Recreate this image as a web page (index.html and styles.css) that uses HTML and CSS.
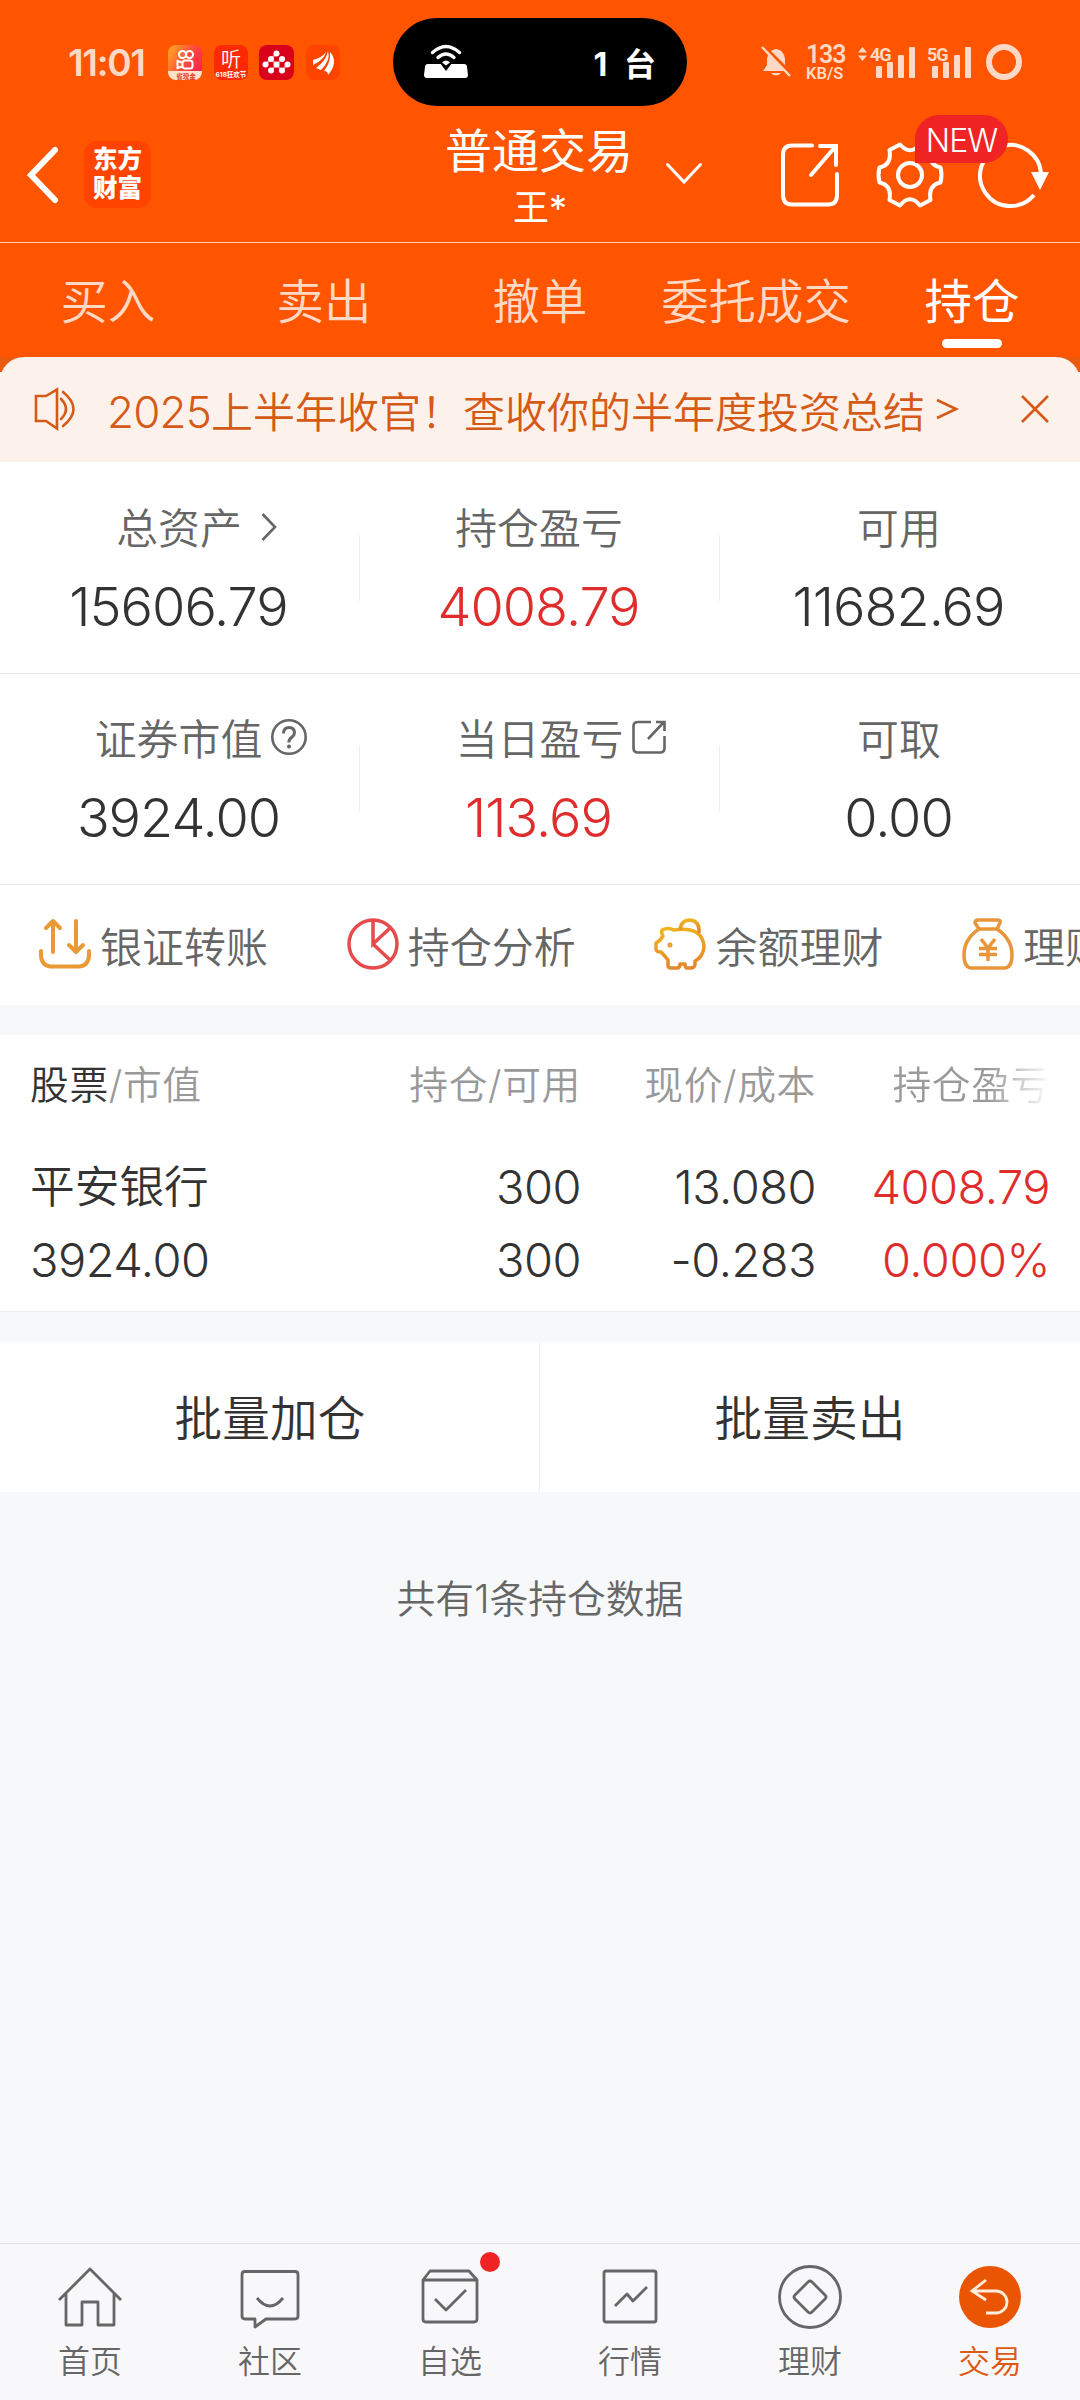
FILE: index.html
```html
<!DOCTYPE html>
<html lang="zh-CN">
<head>
<meta charset="utf-8">
<title>普通交易</title>
<link rel="stylesheet" href="styles.css">
</head>
<body>
<div class="top">
  <div class="status">
    <span class="time">11:01</span>
    <div class="apps">
      <svg width="34" height="35" viewBox="0 0 34 35">
        <defs>
          <linearGradient id="ks" x1="0" y1="0" x2="1" y2="0.6"><stop offset="0" stop-color="#ffae1f"/><stop offset="0.6" stop-color="#ff4a3c"/><stop offset="1" stop-color="#ff2450"/></linearGradient>
          <clipPath id="ksClip"><rect width="34" height="35" rx="8"/></clipPath>
        </defs>
        <g clip-path="url(#ksClip)">
          <rect width="34" height="35" fill="url(#ks)"/>
          <path d="M0 26h34v9H0z" fill="#ffe3c8"/>
        </g>
        <g fill="none" stroke="#fff" stroke-width="2">
          <circle cx="14.500" cy="9.500" r="3.500"/><circle cx="21.500" cy="9.500" r="3.500"/>
          <rect x="14.500" y="15.500" width="10" height="8" rx="2.500"/><path d="M14 17.500l-4.500-1.500v7l4.500-1.500"/>
        </g>
        <text x="18" y="33.500" class="mini red">省现金</text>
      </svg>
      <svg width="34" height="35" viewBox="0 0 34 35">
        <rect width="34" height="35" rx="8" fill="#fb2a05"/>
        <text x="17" y="22" class="ting">听</text>
        <text x="17" y="32" class="mini">618狂欢节</text>
      </svg>
      <svg width="35" height="35" viewBox="0 0 35 35">
        <rect width="35" height="35" rx="8" fill="#d9001b"/>
        <path d="M17.500 8.500L6.500 19.500M23 14L12 25.500M12 14L23 25.500L28.500 19.500" stroke="#e88" stroke-width="2" fill="none"/>
        <g fill="#fff">
          <circle cx="17.500" cy="8.500" r="3"/><circle cx="12" cy="14" r="3"/><circle cx="23" cy="14" r="3"/>
          <circle cx="6.500" cy="19.500" r="3"/><circle cx="17.500" cy="19.500" r="3"/><circle cx="28.500" cy="19.500" r="3"/>
          <circle cx="12" cy="25.500" r="3"/><circle cx="23" cy="25.500" r="3"/>
        </g>
      </svg>
      <svg width="34" height="35" viewBox="0 0 34 35">
        <rect width="34" height="35" rx="8" fill="#ff4400"/>
        <path d="M7 15Q17 12 20 7Q18 15 7 20zM10 23Q20 16 22 6Q25 15 15 25zM18 26Q25 17 24 7Q33 17 22 30Q22 26 18 26z" fill="#fff"/>
      </svg>
    </div>
    <div class="island">
      <svg width="44" height="36" viewBox="0 0 44 36" fill="none">
        <path d="M4 20h36q3 0 3 3l1 8q0 3-3 3H3q-3 0-3-3l1-8q0-3 3-3z" fill="#fff"/>
        <path d="M13 15q9-8.500 18 0l-9 12z" fill="#000"/>
        <path d="M8.500 8.500q13.500-12 27 0M14 13.500q8-7 16 0" stroke="#fff" stroke-width="3.400" stroke-linecap="round"/>
        <path d="M22 21.500l-4-3q4-4 8 0z" fill="#fff"/>
      </svg>
      <span>1 台</span>
    </div>
    <div class="sys">
      <svg width="30" height="33" viewBox="0 0 30 33">
        <path d="M15 3q8 1 9 10v6l4 6H2l4-6v-6q1-9 9-10zM10 27h10q-5 5-10 0z" fill="#ffd9c5"/>
        <path d="M3 1L31 29" stroke="#ff5500" stroke-width="4"/>
        <path d="M1 1L29 30" stroke="#ffd9c5" stroke-width="2.500"/>
      </svg>
      <div class="speed"><b>133</b><i>KB/S</i></div>
      <svg width="114" height="33" viewBox="0 0 114 33" fill="#ffd9c5">
        <path d="M0 6.500L4.500 1L9 6.500zM0 9.500L4.500 15L9 9.500z"/>
        <text x="12" y="14.500" class="net">4G</text><text x="69" y="14.500" class="net">5G</text>
        <rect x="18" y="20" width="6" height="12" rx="1"/><rect x="29" y="16" width="6" height="16" rx="1"/><rect x="40" y="9" width="6" height="23" rx="1"/><rect x="51" y="1" width="6" height="31" rx="1"/>
        <rect x="74" y="20" width="6" height="12" rx="1"/><rect x="85" y="16" width="6" height="16" rx="1"/><rect x="96" y="9" width="6" height="23" rx="1"/><rect x="107" y="1" width="6" height="31" rx="1"/>
      </svg>
      <span class="ring"></span>
    </div>
  </div>

  <div class="header">
    <div class="left">
      <svg width="32" height="58" viewBox="0 0 32 58"><path d="M28 4L4 29L28 54" fill="none" stroke="#fff" stroke-width="6" stroke-linecap="round"/></svg>
      <div class="logo">东方<br>财富</div>
    </div>
    <div class="title"><div class="name">普通交易</div><div class="user">王*</div></div>
    <svg class="down" width="36" height="22" viewBox="0 0 36 22"><path d="M1.500 1.500L18 19L34.500 1.500" fill="none" stroke="#fff" stroke-width="3" stroke-linecap="round"/></svg>
    <div class="tools">
      <svg width="60" height="66" viewBox="0 0 60 66" fill="none" stroke="#fff" stroke-width="4">
        <path d="M32 3.500H12Q3 3.500 3 13V53Q3 62.500 12 62.500H48Q57 62.500 57 53V32" stroke-linecap="round"/>
        <path d="M40 4H56V23M55 5L31 33" stroke-linecap="round"/>
      </svg>
      <svg width="68" height="66" viewBox="0 0 68 66" fill="none" stroke="#fff" stroke-width="4">
        <path d="M24 2.500L13.500 8Q16 23 3.500 25.500Q1.500 33 3.500 40.500Q16 43 13.500 58L24 63.500Q34 51 44 63.500L54.500 58Q52 43 64.500 40.500Q66.500 33 64.500 25.500Q52 23 54.500 8L44 2.500Q34 14 24 2.500z" stroke-linejoin="round"/>
        <circle cx="34" cy="33" r="12"/>
      </svg>
      <svg width="72" height="68" viewBox="0 0 72 68">
        <path d="M56 53A30.500 30.500 0 1 1 63 32" fill="none" stroke="#fff" stroke-width="4"/>
        <path d="M53 30H71L62 48z" fill="#fff"/>
      </svg>
      <span class="new">NEW</span>
    </div>
  </div>

  <div class="tabs">
    <span>买入</span><span>卖出</span><span>撤单</span><span>委托成交</span><span class="on">持仓</span>
  </div>
</div>

<div class="noticeWrap">
  <div class="notice">
    <svg width="42" height="44" viewBox="0 0 42 44" fill="none" stroke="#d65a17" stroke-width="2.600">
      <path d="M2 9H12L23 2.500V41.500L12 34H2z"/><path d="M27 12Q37 22 27 32M29 5Q50 22 29 39" stroke-linecap="round"/>
    </svg>
    <span class="msg"><span class="num">2025</span>上半年收官！查收你的半年度投资总结</span>
    <svg class="gt" width="22" height="20" viewBox="0 0 22 20"><path d="M1 1L20 10L1 19" fill="none" stroke="#d65a17" stroke-width="2.600"/></svg>
    <svg class="close" width="28" height="28" viewBox="0 0 28 28"><path d="M1 1L27 27M27 1L1 27" stroke="#d65a17" stroke-width="2.600"/></svg>
  </div>
</div>

<div class="stats">
  <div class="cell"><div class="label">总资产<svg class="more" width="16" height="28" viewBox="0 0 16 28"><path d="M1.500 1L14 14L1.500 27" fill="none" stroke="#666" stroke-width="2.600"/></svg></div><div class="val">15606.79</div></div>
  <div class="cell"><div class="label">持仓盈亏</div><div class="val up">4008.79</div></div>
  <div class="cell"><div class="label">可用</div><div class="val">11682.69</div></div>
</div>
<div class="stats">
  <div class="cell"><div class="label">证券市值<svg class="tip" width="36" height="36" viewBox="0 0 36 36" fill="none" stroke="#666" stroke-width="2.600"><circle cx="18" cy="18" r="16.700"/><path d="M12.500 14.500Q12.500 8.500 18 8.500T23.500 14Q23.500 16 20.500 18.500T18 23.500" stroke-width="3"/><circle cx="18" cy="27.500" r="1" stroke-width="2"/></svg></div><div class="val">3924.00</div></div>
  <div class="cell"><div class="label">当日盈亏<svg class="tip" width="34" height="34" viewBox="0 0 34 34" fill="none" stroke="#666" stroke-width="2.600"><path d="M19 2H6Q1.500 2 1.500 6V28Q1.500 32.500 6 32.500H28Q32.500 32.500 32.500 28V16M24 2H32.500V11M32 2L16 19"/></svg></div><div class="val up">113.69</div></div>
  <div class="cell"><div class="label">可取</div><div class="val">0.00</div></div>
</div>

<div class="quick">
  <div class="item">
    <svg width="52" height="52" viewBox="0 0 52 52" fill="none" stroke="#e99a36" stroke-width="4" stroke-linecap="round" stroke-linejoin="round"><path d="M14 34V4M7 10L14 3L21 10M37 3V34M30 27L37 34L44 27M2 33V38Q3 48 12 48.500H40Q49 48 50 38V33"/></svg>
    银证转账
  </div>
  <div class="item">
    <svg width="52" height="52" viewBox="0 0 52 52" fill="none" stroke="#e54c4c" stroke-width="3.500"><circle cx="26" cy="26" r="24"/><path d="M26 2V26L43 10M26 26L43 42"/></svg>
    持仓分析
  </div>
  <div class="item">
    <svg width="52" height="52" viewBox="0 0 52 52" fill="none" stroke="url(#gold)" stroke-width="3.500" stroke-linejoin="round">
      <defs><linearGradient id="gold" x1="0" y1="0" x2="0.200" y2="1"><stop offset="0" stop-color="#f0b51c"/><stop offset="1" stop-color="#e5892b"/></linearGradient></defs>
      <path d="M8 12Q14 9 20 12Q49 8 50 29Q49 39 41 43V47Q40 50 37 50H33Q31 50 31 46H26Q26 50 23 50H17Q14 50 14 47V42Q11 38 7 34Q2 34 2 31V25Q6 23 9 18Q7 15 8 12z"/>
      <path d="M26 12Q27 2 36 2Q46 3 45 15"/><circle cx="16" cy="27" r="1" stroke="#e79a25" stroke-width="3"/>
    </svg>
    余额理财
  </div>
  <div class="item">
    <svg width="52" height="52" viewBox="0 0 52 52" fill="none" stroke="#e9963b" stroke-width="3.500" stroke-linejoin="round">
      <path d="M17 11L13 5Q13 2 16 2H36Q39 2 38 5L35 11zM17 11Q2 21 2 37Q2 50 10 50H42Q50 50 50 37Q50 21 35 11"/>
      <path d="M19 21L26 30L33 21M26 30V43M17 30.500H35M17 36.500H35"/>
    </svg>
    理财
  </div>
</div>

<div class="table">
  <div class="row head"><span><b>股票</b>/市值</span><span>持仓/可用</span><span>现价/成本</span><span class="fade">持仓盈亏</span></div>
  <div class="row"><span class="stock">平安银行</span><span>300</span><span>13.080</span><span class="up">4008.79</span></div>
  <div class="row"><span>3924.00</span><span>300</span><span>-0.283</span><span class="up">0.000%</span></div>
</div>

<div class="batch"><span>批量加仓</span><span>批量卖出</span></div>
<div class="total">共有1条持仓数据</div>

<div class="nav">
  <div><svg width="64" height="64" viewBox="0 0 64 64"><path d="M1 35L32 4L63 35M8 29V60H24V37H40V60H56V29"/></svg>首页</div>
  <div><svg width="64" height="64" viewBox="0 0 64 64"><path d="M7 6.500H57Q60 6.500 60 9.500V51Q60 54 57 54H28L17 62V54H7Q4 54 4 51V9.500Q4 6.500 7 6.500zM19 33Q32 49 45 33"/></svg>社区</div>
  <div><svg width="64" height="64" viewBox="0 0 64 64"><path d="M5 15L12 6H51L59 15V54Q59 57 56 57H8Q5 57 5 54zM5 15H59M17 34L28 45L48 25"/></svg>自选<em></em></div>
  <div><svg width="64" height="64" viewBox="0 0 64 64"><path d="M8 6H56Q58 6 58 8V55Q58 57 56 57H8Q6 57 6 55V8Q6 6 8 6zM17 41L29 29L35 36L49 22"/></svg>行情</div>
  <div><svg width="64" height="64" viewBox="0 0 64 64"><circle cx="32" cy="32" r="30.500"/><path d="M30 17Q32 15 34 17L47 30Q49 32 47 34L34 47Q32 49 30 47L17 34Q15 32 17 30z"/></svg>理财</div>
  <div class="act"><svg width="64" height="64" viewBox="0 0 64 64"><circle class="dot" cx="32" cy="32" r="31"/><path class="w" d="M28 15L14 26L28 35M15 26H38A11 11 0 0 1 38 48H28"/></svg>交易</div>
</div>
</body>
</html>
```
FILE: styles.css
```css
*{
    box-sizing: border-box;
}
body{
    margin: 0;
    width: 1080px;
    height: 2400px;
    overflow: hidden;
    display: flex;
    flex-direction: column;
    background: #f6f8fa;
    color: #333;
    font-family: Inter, "Noto Sans CJK SC", sans-serif;
    font-weight: 350;
    white-space: nowrap;
}
svg{
    display: block;
    flex: none;
    overflow: visible;
}
.top{
    background: #ff5500;
    color: #fff;
    height: 357px;
}
.status{
    height: 124px;
    display: flex;
    align-items: center;
    color: #ffd9c5;
}
.time{
    margin-left: 68px;
    width: 100px;
    font-size: 37px;
    font-weight: 600;
    letter-spacing: -1.3px;
}
.apps{
    display: flex;
    gap: 11.5px;
    width: 171px;
}
.mini{
    font-size: 6.5px;
    font-weight: 700;
    fill: #fff;
    text-anchor: middle;
}
.red{
    fill: #e8321c;
}
.ting{
    font-size: 20px;
    fill: #fff;
    text-anchor: middle;
}
.island{
    margin-left: 54px;
    width: 294px;
    height: 88px;
    border-radius: 44px;
    background: #000;
    color: #fff;
    display: flex;
    align-items: center;
    justify-content: space-between;
    padding: 0 31px;
    font-size: 32px;
    font-weight: 700;
    word-spacing: 9px;
}
.sys{
    margin-left: 74px;
    display: flex;
    align-items: center;
}
.speed{
    width: 40px;
    margin: 2px 12px 0 15px;
}
.speed b, .speed i{
    display: block;
    font-style: normal;
    font-weight: 600;
    font-family: Roboto, sans-serif;
}
.speed b{
    font-size: 25px;
    line-height: 20px;
    letter-spacing: -1.2px;
}
.speed i{
    font-size: 16.5px;
    line-height: 17px;
}
.net{
    font-family: Roboto, sans-serif;
    font-size: 18px;
    font-weight: 700;
    letter-spacing: -1px;
}
.ring{
    width: 36px;
    height: 36px;
    border: 6px solid #ffd9c5;
    border-radius: 50%;
    margin-left: 14px;
}
.header{
    height: 119px;
    border-bottom: 1px solid #ffd0b0;
    display: grid;
    grid-template-columns: 440px 198px 28px 114px 1fr;
    padding-top: 1px;
}
.left{
    display: flex;
    align-items: center;
    padding-left: 27px;
    height: 99px;
}
.logo{
    margin-left: 25px;
    width: 67px;
    height: 67px;
    border-radius: 13px;
    background: #ff4400;
    font-size: 24.5px;
    line-height: 29px;
    font-weight: 900;
    text-align: center;
    padding-top: 4px;
}
.title{
    text-align: center;
    font-weight: 400;
}
.name{
    font-size: 47px;
    line-height: 52px;
}
.user{
    font-size: 36px;
    line-height: 62px;
    padding-left: 2px;
}
.down{
    grid-column: 4;
    margin-top: 38px;
}
.tools{
    display: flex;
    align-items: flex-start;
    gap: 36px;
    padding-top: 17px;
    position: relative;
}
.tools svg:nth-child(3){
    margin-left: -2px;
}
.new{
    position: absolute;
    left: 135px;
    top: -10px;
    width: 93px;
    height: 48px;
    border-radius: 24px 24px 24px 0;
    background: #f02424;
    font-size: 32px;
    line-height: 51px;
    text-align: center;
    letter-spacing: -1px;
}
.tabs{
    display: grid;
    grid-template-columns: repeat(5, 1fr);
    text-align: center;
    font-size: 47.4px;
    line-height: 118px;
    color: #ffd9c5;
}
.on{
    color: #fff;
    font-weight: 400;
    position: relative;
}
.on::after{
    content: "";
    position: absolute;
    left: 78px;
    top: 96px;
    width: 60px;
    height: 9px;
    border-radius: 5px;
    background: #fff;
}
.noticeWrap{
    height: 106px;
    flex: none;
    background: linear-gradient(#ea5a0c 15px, #fff 15px);
}
.notice{
    height: 105px;
    border-radius: 24px 24px 0 0;
    background: #fdf1eb;
    color: #d65a17;
    display: flex;
    align-items: center;
    padding: 0 31px 1px 34px;
    font-size: 42px;
}
.msg{
    margin-left: 31px;
}
.num{
    font-size: 44px;
    letter-spacing: -0.8px;
}
.gt{
    margin-left: 11px;
}
.close{
    margin-left: auto;
}
.stats{
    height: 211px;
    flex: none;
    background: #fff;
    border-bottom: 1px solid #eaeaea;
    display: grid;
    grid-template-columns: repeat(3, 1fr);
}
.cell{
    text-align: center;
    padding-top: 36px;
    background: linear-gradient(#eee, #eee) right 72px / 1px 66px no-repeat;
}
.cell:last-child{
    background: none;
}
.label{
    display: flex;
    justify-content: center;
    align-items: center;
    font-size: 41.9px;
    line-height: 60px;
    color: #666;
    margin-right: 2px;
}
.more{
    margin: -4px -35px 0 19px;
}
.tip{
    margin: -6px -44px 0 9px;
}
.val{
    font-size: 54px;
    line-height: 96px;
    letter-spacing: -1px;
    padding-right: 3px;
}
.up{
    color: #df2d2d;
}
.quick{
    height: 120px;
    flex: none;
    overflow: hidden;
    background: #fff;
    display: flex;
    padding-left: 39px;
    color: #666;
    font-size: 42px;
}
.item{
    flex: none;
    width: 307.7px;
    display: flex;
    align-items: center;
    gap: 9px;
    padding-bottom: 2px;
}
.table{
    margin-top: 30px;
    height: 277px;
    background: #fff;
    border-bottom: 1px solid #eaecee;
    padding: 12px 30px 0;
}
.row{
    display: grid;
    grid-template-columns: 315px 236px 235px 234px;
    text-align: right;
    font-size: 47px;
    line-height: 73px;
    height: 73px;
    letter-spacing: -0.5px;
}
.row span:first-child{
    text-align: left;
}
.head{
    font-size: 38.8px;
    line-height: 75px;
    height: 103px;
    color: #999;
    letter-spacing: 0.6px;
}
.head b{
    font-weight: 350;
    color: #333;
}
.fade{
    height: 75px;
    background: linear-gradient(90deg, #999 172px, #fff 236px);
    -webkit-background-clip: text;
    background-clip: text;
    color: transparent;
}
.row .stock{
    font-size: 44.7px;
    letter-spacing: 0;
    line-height: 75px;
}
.batch{
    margin-top: 30px;
    height: 150px;
    background: linear-gradient(#eee, #eee) 539px 0 / 1px 100% no-repeat #fff;
    display: grid;
    grid-template-columns: 1fr 1fr;
    text-align: center;
    font-size: 47.7px;
    line-height: 154px;
}
.total{
    margin-top: 78px;
    text-align: center;
    font-size: 38.8px;
    line-height: 58px;
    color: #666;
}
.nav{
    margin-top: auto;
    height: 157px;
    border-top: 1px solid #e2e2e4;
    background: #f8f8fa;
    display: grid;
    grid-template-columns: repeat(6, 1fr);
    font-size: 32px;
    color: #666;
    line-height: 65px;
}
.nav div{
    display: flex;
    flex-direction: column;
    align-items: center;
    padding-top: 21px;
    position: relative;
}
.nav svg{
    fill: none;
    stroke: #666;
    stroke-width: 2.8;
    stroke-linejoin: round;
}
.nav em{
    position: absolute;
    left: 120px;
    top: 8px;
    width: 20px;
    height: 20px;
    border-radius: 50%;
    background: #f02424;
}
.nav .act{
    color: #dc5a14;
}
.nav .dot{
    fill: #ea5504;
    stroke: none;
}
.nav .w{
    stroke: #ffeedd;
    stroke-linejoin: miter;
}
```
